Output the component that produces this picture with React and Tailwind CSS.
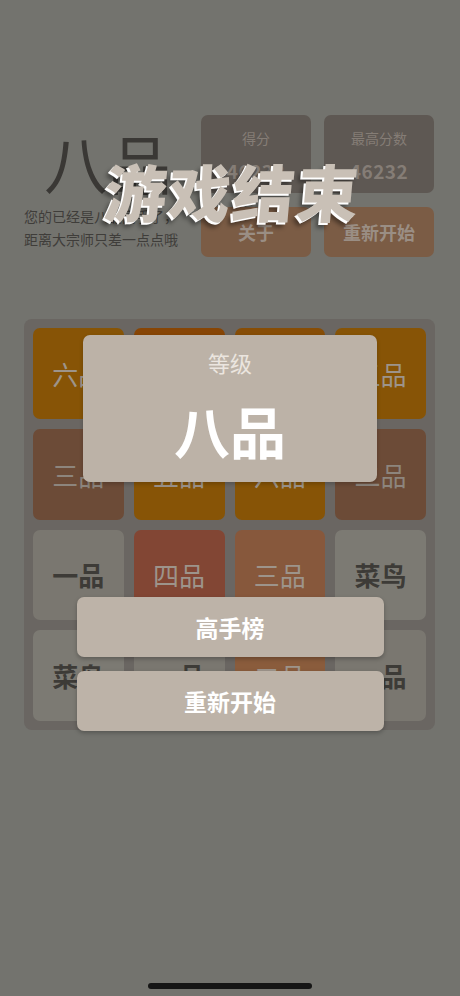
import React from 'react';

// dimmed palette: the board sits behind the game-over layer
const TILE_STYLE = {
  rookie: 'bg-[#7c7a73] text-[#3d3b37] font-bold',
  one: 'bg-[#7a7770] text-[#3d3b37] font-bold',
  two: 'bg-[#6c4b37] text-[#8d857d]',
  three: 'bg-[#87583c] text-[#9d948b]',
  four: 'bg-[#824634] text-[#9d948b]',
  five: 'bg-[#875406] text-[#9d948b]',
  six: 'bg-[#875406] text-[#9d948b]',
  seven: 'bg-[#874505] text-[#9d948b]',
  eight: 'bg-[#874d06] text-[#9d948b]',
  grey: 'bg-[#7a7770] text-[#3d3b37] font-bold',
  orange2: 'bg-[#8a5c3c] text-[#9d948b]',
};

const board = [
  [['六品', 'six'], ['七品', 'seven'], ['八品', 'eight'], ['五品', 'five']],
  [['三品', 'two'], ['五品', 'five'], ['六品', 'six'], ['二品', 'two']],
  [['一品', 'one'], ['四品', 'four'], ['三品', 'three'], ['菜鸟', 'rookie']],
  [['菜鸟', 'rookie'], ['一品', 'grey'], ['二品', 'orange2'], ['一品', 'grey']],
];

const Tile = ({ label, kind }) => (
  <div
    className={`flex flex-1 items-center justify-center rounded-[7px] text-[26px] ${TILE_STYLE[kind]}`}
  >
    {label}
  </div>
);

const ScoreBox = ({ title, value }) => (
  <div className="flex h-[78px] flex-col items-center rounded-[7px] bg-[#5e5853] pt-[12px]">
    <span className="text-[14px] leading-[22px] text-[#857d76]">{title}</span>
    <span className="mt-[11px] text-[19px] font-bold leading-[22px] tracking-wide text-[#857d76]">
      {value}
    </span>
  </div>
);

const MenuButton = ({ children }) => (
  <div className="flex h-[50px] items-center justify-center rounded-[7px] bg-[#7b5c45] text-[18px] font-bold text-[#9a8e84]">
    {children}
  </div>
);

const ModalButton = ({ children, className = '' }) => (
  <button
    className={`flex h-[60px] w-[307px] items-center justify-center rounded-[7px] bg-[#bdb3a8] text-[23px] font-bold text-white shadow-[0_2px_4px_rgba(0,0,0,0.25)] ${className}`}
  >
    {children}
  </button>
);

export default function App() {
  return (
    <div className="relative h-[996px] w-[460px] overflow-hidden bg-[#73736e] font-['Noto_Sans_CJK_SC','Noto_Sans',sans-serif]">
      {/* game header */}
      <div className="flex justify-between pl-[24px] pr-[26px] pt-[115px]">
        <div className="flex flex-col">
          <div className="ml-[20px] mt-[14px] text-[64px] leading-none text-[#3a3835]">八品</div>
          <div className="mt-[12px] text-[14px] leading-[23px] text-[#3f3d3a]">
            <p>您的已经是八品高手了，</p>
            <p>距离大宗师只差一点点哦</p>
          </div>
        </div>
        <div className="grid w-[233px] grid-cols-2 gap-x-[13px] gap-y-[14px]">
          <ScoreBox title="得分" value="46232" />
          <ScoreBox title="最高分数" value="46232" />
          <MenuButton>关于</MenuButton>
          <MenuButton>重新开始</MenuButton>
        </div>
      </div>

      {/* board */}
      <div className="ml-[24px] mt-[62px] flex h-[411px] w-[411px] flex-col gap-[10px] rounded-[8px] bg-[#6a6662] p-[9px]">
        {board.map((row, r) => (
          <div key={r} className="flex flex-1 gap-[10px]">
            {row.map(([label, kind], c) => (
              <Tile key={c} label={label} kind={kind} />
            ))}
          </div>
        ))}
      </div>

      {/* game over layer */}
      <div className="absolute inset-0 flex flex-col items-center">
        <h1 className="ml-[6px] mt-[159px] -skew-x-[5deg] text-[62px] font-black leading-none tracking-[2px] text-[#c9c0b6] [text-shadow:-2px_2px_0_#ffffff,-4px_5px_4px_rgba(0,0,0,0.4)]">
          游戏结束
        </h1>

        <div className="mt-[114px] flex h-[147px] w-[294px] flex-col items-center rounded-[7px] bg-[#bcb2a7] shadow-[0_2px_4px_rgba(0,0,0,0.2)]">
          <span className="mt-[13px] text-[22px] leading-[28px] text-[#ebe5df]">等级</span>
          <span className="mt-[26px] text-[56px] font-bold leading-none text-white">八品</span>
        </div>

        <ModalButton className="mt-[115px]">高手榜</ModalButton>
        <ModalButton className="mt-[14px]">重新开始</ModalButton>

        <div className="absolute bottom-[7px] left-[148px] h-[6px] w-[164px] rounded-full bg-[#161616]" />
      </div>
    </div>
  );
}
